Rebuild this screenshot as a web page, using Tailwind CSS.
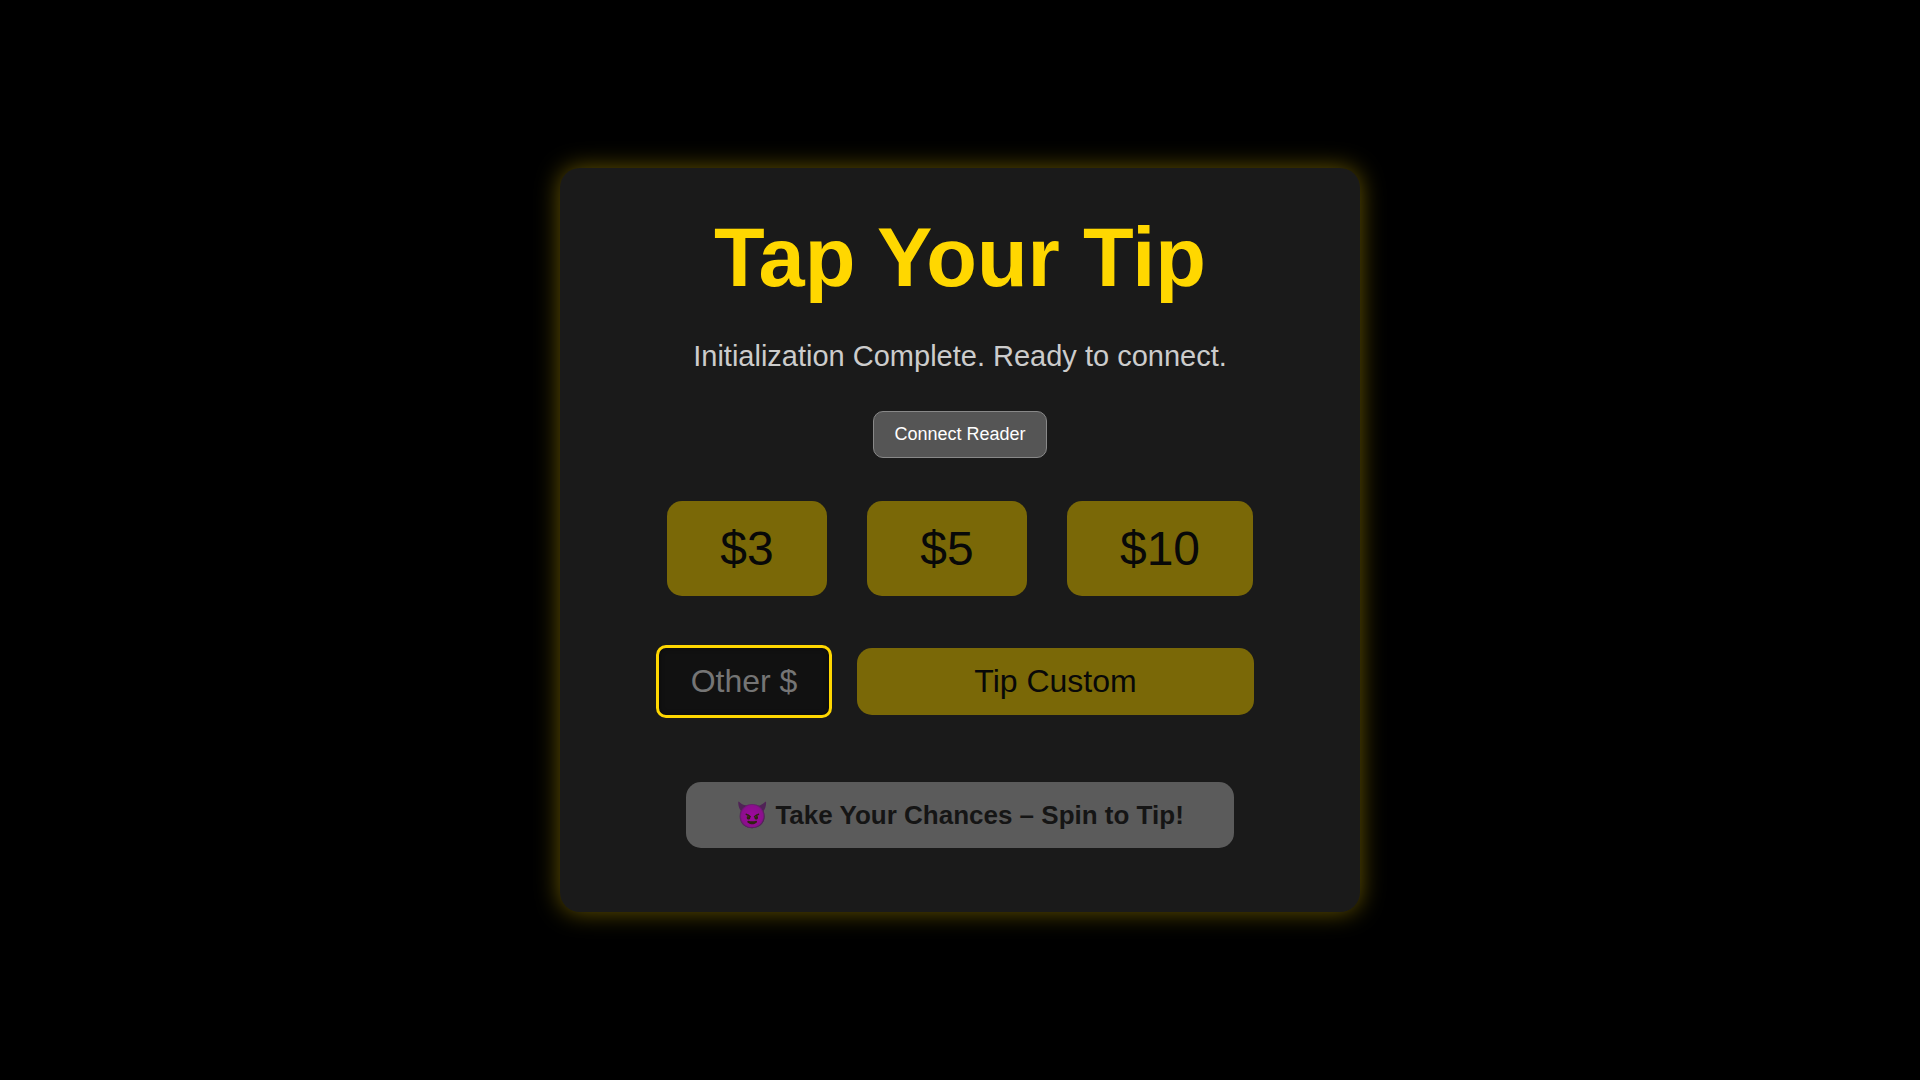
<!DOCTYPE html>
<html lang="en">

<head>
   <meta charset="UTF-8">
   <meta name="viewport" content="width=device-width, initial-scale=1.0">
   <title>Tap Your Tip</title>
   <script src="https://cdn.jsdelivr.net/npm/@tailwindcss/browser@4"></script>
</head>

<body class="bg-black min-h-screen flex items-center justify-center font-['Liberation_Sans',Arial,sans-serif]">
   <main class="w-full max-w-[800px] flex flex-col items-center bg-[#1a1a1a] rounded-[20px] px-10 pt-[42px] pb-16 text-center shadow-[0_0_25px_rgba(255,215,0,0.4)]">
      <h1 class="text-[83px] leading-[96px] font-bold text-[#ffd700]">Tap Your Tip</h1>
      <p id="status" class="mt-[34px] text-[29px] leading-[33px] text-[#cccccc]">Initialization Complete. Ready to connect.</p>

      <button id="connect-reader" type="button"
         class="mt-[38px] px-5 py-3 text-[18px] leading-[21px] text-white bg-[#555555] border border-[#888888] rounded-[10px] cursor-pointer">
         Connect Reader
      </button>

      <!-- Preset amounts -->
      <div class="mt-[43px] flex flex-wrap justify-center gap-10">
         <button type="button" disabled class="min-w-40 px-[53px] py-5 text-[48px] leading-[55px] text-[#080808] bg-[#7a6807] rounded-[15px]">$3</button>
         <button type="button" disabled class="min-w-40 px-[53px] py-5 text-[48px] leading-[55px] text-[#080808] bg-[#7a6807] rounded-[15px]">$5</button>
         <button type="button" disabled class="min-w-40 px-[53px] py-5 text-[48px] leading-[55px] text-[#080808] bg-[#7a6807] rounded-[15px]">$10</button>
      </div>

      <!-- Custom amount -->
      <form class="mt-[49px] w-full max-w-[608px] pr-[10px] flex items-center gap-[25px]">
         <input type="text" id="custom-amount" placeholder="Other $" aria-label="Other amount"
            class="w-44 py-[15px] text-[32px] leading-[37px] text-center text-white placeholder:text-[#757575] bg-[#111111] border-3 border-[#ffd700] rounded-[10px] shadow-[inset_0_0_5px_rgba(0,0,0,0.5)] outline-none">
         <button type="button" disabled class="flex-1 py-[15px] text-[32px] leading-[37px] text-[#080808] bg-[#7a6807] rounded-[15px]">Tip Custom</button>
      </form>

      <button type="button" disabled
         class="mt-16 px-[50px] py-[18px] text-[26px] leading-[30px] font-bold text-[#151515] bg-[#5b5b5b] rounded-[15px]">
         <span class="brightness-65 opacity-90">😈</span> Take Your Chances – Spin to Tip!
      </button>
   </main>
</body>

</html>
